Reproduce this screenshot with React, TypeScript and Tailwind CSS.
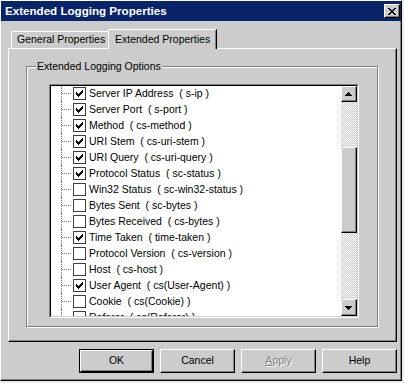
const items: [string, string, boolean][] = [
  ["Server IP Address", "s-ip", true],
  ["Server Port", "s-port", true],
  ["Method", "cs-method", true],
  ["URI Stem", "cs-uri-stem", true],
  ["URI Query", "cs-uri-query", true],
  ["Protocol Status", "sc-status", true],
  ["Win32 Status", "sc-win32-status", false],
  ["Bytes Sent", "sc-bytes", false],
  ["Bytes Received", "cs-bytes", false],
  ["Time Taken", "time-taken", true],
  ["Protocol Version", "cs-version", false],
  ["Host", "cs-host", false],
  ["User Agent", "cs(User-Agent)", true],
  ["Cookie", "cs(Cookie)", false],
  ["Referer", "cs(Referer)", false],
];

const raised =
  "border border-t-white border-l-white border-r-black border-b-black shadow-[inset_-1px_-1px_0_#808080] bg-[#cccccc]";

function Check({ on }: { on: boolean }) {
  return (
    <div className="w-[13px] h-[13px] shrink-0 border border-[#404040] bg-white">
      {on && (
        <svg width="11" height="11" viewBox="0 0 11 11" shapeRendering="crispEdges">
          <path
            d="M2 4h1v3H2zM3 5h1v3H3zM4 6h1v3H4zM5 5h1v3H5zM6 4h1v3H6zM7 3h1v3H7zM8 2h1v3H8z"
            fill="#000"
          />
        </svg>
      )}
    </div>
  );
}

function Arrow({ up }: { up: boolean }) {
  return (
    <svg width="14" height="14" viewBox="0 0 14 14" shapeRendering="crispEdges">
      <path
        d={up ? "M6 5h1v1H6zM5 6h3v1H5zM4 7h5v1H4zM3 8h7v1H3z" : "M3 5h7v1H3zM4 6h5v1H4zM5 7h3v1H5zM6 8h1v1H6z"}
        fill="#000"
      />
    </svg>
  );
}

function Button({ label, isDefault, disabled }: { label: React.ReactNode; isDefault?: boolean; disabled?: boolean }) {
  return (
    <div className={`w-[75px] h-[24px] ${isDefault ? "border border-black" : ""}`}>
      <div
        className={`${raised} w-full h-full flex items-center justify-center ${
          disabled ? "text-[#808080] [text-shadow:1px_1px_0_#fff]" : "text-black"
        }`}
      >
        {label}
      </div>
    </div>
  );
}

export default function App() {
  return (
    <div className="w-[404px] h-[383px] bg-[#ececec] font-['Liberation_Sans',Arial,sans-serif] text-[10.5px] text-black">
      <div className="w-[402px] h-[381px] flex flex-col bg-[#cccccc] border-l border-t border-l-white border-t-white border-r border-b border-r-black border-b-black shadow-[inset_-1px_-1px_0_#808080]">
        {/* title bar */}
        <div className="h-[20px] bg-[#0a246a] flex items-center justify-between pl-[4px] pr-[1px]">
          <span className="text-white font-bold text-[11.6px]">Extended Logging Properties</span>
          <div className={`${raised} w-[16px] h-[14px] flex items-center justify-center`}>
            <svg width="8" height="7" viewBox="0 0 8 7" shapeRendering="crispEdges">
              <path
                d="M0 0h2v1H0zM6 0h2v1H6zM1 1h2v1H1zM5 1h2v1H5zM2 2h4v1H2zM3 3h2v1H3zM2 4h4v1H2zM1 5h2v1H1zM5 5h2v1H5zM0 6h2v1H0zM6 6h2v1H6z"
                fill="#000"
              />
            </svg>
          </div>
        </div>

        {/* body */}
        <div className="flex flex-col pl-[7px] pr-[4px] pt-[7px]">
          {/* tabs */}
          <div className="flex items-end h-[20px] pl-[3px]">
            <div className="h-[18px] w-[98px] -mb-px border-t border-l border-t-white border-l-white border-r border-r-[#808080] rounded-tl-[2px] flex items-center pl-[5px] pb-px">
              General Properties
            </div>
            <div className="relative z-10 h-[20px] w-[109px] -ml-px -mb-px bg-[#cccccc] border-t border-l border-t-white border-l-white border-r border-r-black shadow-[inset_-1px_0_0_#808080] rounded-tl-[2px] flex items-start pt-[2px] pl-[6px]">
              Extended Properties
            </div>
          </div>

          {/* panel */}
          <div className="h-[294px] border border-t-white border-l-white border-r-black border-b-black shadow-[inset_-1px_-1px_0_#808080] pt-[17px] pl-[17px] pr-[18px] pb-[14px]">
            {/* group box */}
            <div className="relative h-full border border-[#808080] shadow-[inset_1px_1px_0_#fff,1px_1px_0_#fff] pt-[17px] pl-[22px] pr-[18px]">
              <span className="absolute -top-[7px] left-[9px] px-px bg-[#cccccc] leading-[13px]">
                Extended Logging Options
              </span>

              {/* list box */}
              <div className="h-[234px] border border-t-[#808080] border-l-[#808080] border-r-white border-b-white">
                <div className="h-full flex border border-t-black border-l-black border-r-[#cccccc] border-b-[#cccccc] bg-white">
                  <div className="flex-1 overflow-hidden">
                    <div className="-mt-px">
                      {items.map(([name, code, on]) => (
                        <div key={name} className="flex h-[16px] items-center">
                          <div className="ml-[10px] w-[12px] h-full border-l border-dotted border-[#808080] flex items-center">
                            <div className="w-[9px] border-t border-dotted border-[#808080]" />
                          </div>
                          <Check on={on} />
                          <span className="ml-[3px] whitespace-pre leading-[16px]">
                            {name}  ( {code} )
                          </span>
                        </div>
                      ))}
                    </div>
                  </div>

                  {/* scrollbar */}
                  <div className="w-[16px] flex flex-col bg-[conic-gradient(#ffffff_25%,#cccccc_0_50%,#ffffff_0_75%,#cccccc_0)] bg-[length:2px_2px]">
                    <div className={`${raised} h-[16px] flex items-center justify-center`}>
                      <Arrow up />
                    </div>
                    <div className="h-[45px]" />
                    <div className={`${raised} h-[86px]`} />
                    <div className="flex-1" />
                    <div className={`${raised} h-[17px] flex items-center justify-center`}>
                      <Arrow up={false} />
                    </div>
                  </div>
                </div>
              </div>
            </div>
          </div>

          {/* buttons */}
          <div className="flex justify-end gap-[6px] mt-[7px]">
            <Button label="OK" isDefault />
            <Button label="Cancel" />
            <Button
              label={
                <span>
                  <span className="underline">A</span>pply
                </span>
              }
              disabled
            />
            <Button label="Help" />
          </div>
        </div>
      </div>
    </div>
  );
}
